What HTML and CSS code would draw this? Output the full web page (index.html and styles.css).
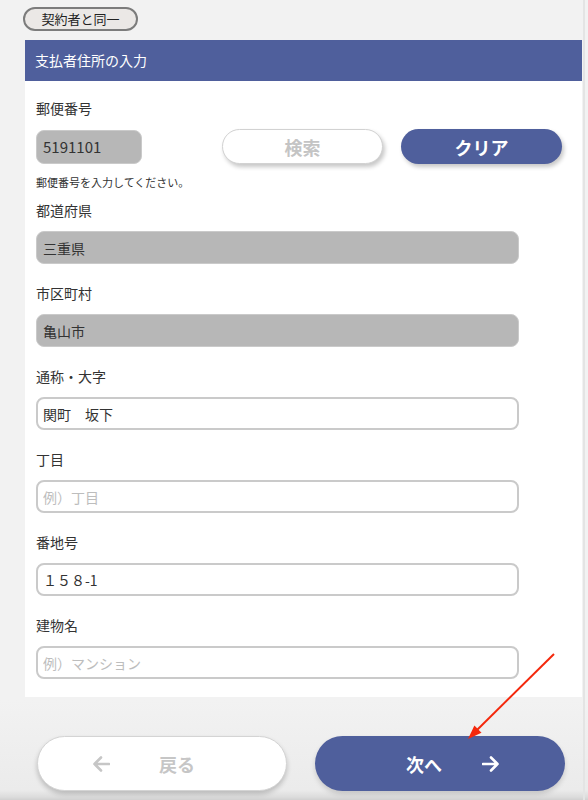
FILE: index.html
```html
<!DOCTYPE html>
<html lang="ja">
<head>
<meta charset="utf-8">
<title>支払者住所の入力</title>
<link rel="stylesheet" href="styles.css">
</head>
<body>
<div class="page">
  <div class="top"><button class="same-btn">契約者と同一</button></div>
  <section class="panel">
    <h2 class="panel-head">支払者住所の入力</h2>
    <div class="panel-body">
      <div class="label">郵便番号</div>
      <div class="zip-row">
        <input class="field gray zip" value="5191101" readonly>
        <button class="pill ghost">検索</button>
        <button class="pill primary">クリア</button>
      </div>
      <p class="hint">郵便番号を入力してください。</p>
      <div class="group first">
        <div class="label">都道府県</div>
        <input class="field gray" value="三重県" readonly>
      </div>
      <div class="group">
        <div class="label">市区町村</div>
        <input class="field gray" value="亀山市" readonly>
      </div>
      <div class="group">
        <div class="label">通称・大字</div>
        <input class="field white" value="関町　坂下">
      </div>
      <div class="group">
        <div class="label">丁目</div>
        <input class="field white" placeholder="例）丁目">
      </div>
      <div class="group">
        <div class="label">番地号</div>
        <input class="field white" value="１５８-1">
      </div>
      <div class="group">
        <div class="label">建物名</div>
        <input class="field white" placeholder="例）マンション">
      </div>
    </div>
  </section>
  <div class="footer">
    <button class="nav-btn back">
      <svg class="arr" width="18" height="16" viewBox="0 0 18 16"><path d="M17 8H2.5M9 1.5L2.5 8L9 14.5" fill="none" stroke="currentColor" stroke-width="2.6" stroke-linecap="round" stroke-linejoin="round"/></svg>
      <span class="back-text">戻る</span>
    </button>
    <button class="nav-btn next">
      <span class="next-text">次へ</span>
      <svg class="arr" width="18" height="16" viewBox="0 0 18 16"><path d="M1 8H15.5M9 1.5L15.5 8L9 14.5" fill="none" stroke="currentColor" stroke-width="2.6" stroke-linecap="round" stroke-linejoin="round"/></svg>
    </button>
  </div>
  <svg class="annot" width="588" height="800" viewBox="0 0 588 800">
    <line x1="554" y1="654" x2="476" y2="731" stroke="#f4280c" stroke-width="2"/>
    <polygon points="468,739 481.5,732.7 474.4,725.6" fill="#f4280c"/>
  </svg>
</div>
</body>
</html>
```

FILE: styles.css
```css
html, body {
  margin: 0;
  padding: 0;
}

body {
  background: #f1f1f1;
  font-family: "Noto Sans CJK JP", "Noto Sans", sans-serif;
  color: #333;
}

.page {
  position: relative;
  width: 588px;
  height: 800px;
  overflow: hidden;
  background:
    linear-gradient(to right, transparent 583px, #e4e4e4 583px, #e4e4e4 585px, transparent 585px),
    linear-gradient(to bottom, #f2f2f2 0, #f2f2f2 700px, #ebebeb 790px, #dcdcdc 797px, #d0d0d0 800px);
}

.top {
  height: 40px;
  box-sizing: border-box;
  padding: 7px 0 0 23px;
}

.same-btn {
  display: block;
  box-sizing: border-box;
  width: 115px;
  height: 24px;
  padding: 0;
  border: 2px solid #7c7c7c;
  border-radius: 12px;
  background: #ebe8e6;
  font-family: inherit;
  font-size: 13px;
  line-height: 18px;
  color: #222;
}

.panel {
  margin-left: 25px;
  width: 557px;
  background: #fff;
}

.panel-head {
  margin: 0;
  height: 41px;
  padding-left: 10px;
  background: #4f5f9c;
  color: #fff;
  font-size: 14px;
  font-weight: normal;
  line-height: 40px;
}

.panel-body {
  padding: 17px 0 18px 11px;
}

.label {
  height: 20px;
  font-size: 14px;
  line-height: 20px;
  color: #333;
}

.zip-row {
  display: flex;
  align-items: center;
  height: 35px;
  margin-top: 11px;
}

.field {
  display: block;
  box-sizing: border-box;
  width: 483px;
  height: 33px;
  margin: 11px 0 0;
  padding: 0 6px;
  border-radius: 8px;
  font-family: inherit;
  font-size: 14px;
  color: #333;
  outline: none;
}

.field::placeholder {
  color: #bdbdbd;
}

.gray {
  background: #b7b7b7;
  border: 1px solid #cacaca;
}

.white {
  background: #fff;
  border: 2px solid #cacaca;
  padding-left: 5px;
}

.zip {
  width: 106px;
  height: 34px;
  margin: 0;
  font-size: 15px;
}

.pill {
  box-sizing: border-box;
  width: 161px;
  height: 35px;
  border-radius: 18px;
  font-family: inherit;
  font-size: 18px;
  font-weight: bold;
  padding: 0;
}

.ghost {
  margin-left: 80px;
  background: #fff;
  border: 1px solid #d2d2d2;
  color: #c4c4c4;
  box-shadow: 2px 3px 4px rgba(0, 0, 0, 0.22);
}

.primary {
  margin-left: 18px;
  background: #4f5f9c;
  border: none;
  color: #fff;
  box-shadow: 2px 3px 4px rgba(0, 0, 0, 0.22);
}

.hint {
  margin: 10px 0 0;
  font-size: 11px;
  line-height: 16px;
  color: #333;
}

.group {
  margin-top: 19px;
}

.group.first {
  margin-top: 10px;
}

.footer {
  display: flex;
  gap: 28px;
  margin-top: 39px;
  padding-left: 37px;
}

.nav-btn {
  display: flex;
  align-items: center;
  box-sizing: border-box;
  width: 250px;
  height: 55px;
  border-radius: 28px;
  font-family: inherit;
  font-size: 18px;
  font-weight: bold;
  padding: 0;
}

.back {
  background: #fff;
  border: 1px solid #d4d4d4;
  color: #c6c6c6;
  padding-left: 54px;
  box-shadow: 0 3px 5px rgba(0, 0, 0, 0.2);
}

.back-text {
  margin-left: 49px;
}

.next {
  background: #4f5f9c;
  border: none;
  color: #fff;
  padding-left: 91px;
  box-shadow: 0 3px 5px rgba(0, 0, 0, 0.15);
}

.next-text {
  margin-right: 40px;
}

.arr {
  display: block;
}

.annot {
  position: absolute;
  left: 0;
  top: 0;
  pointer-events: none;
}
```
